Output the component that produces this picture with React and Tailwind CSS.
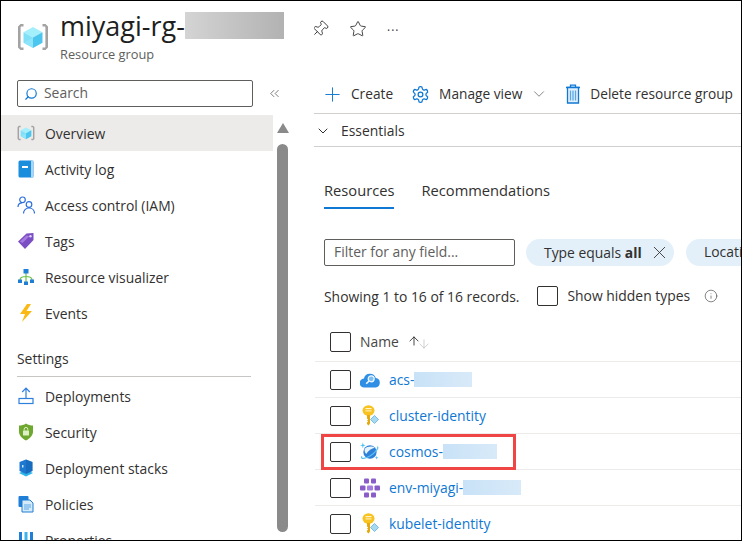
import React from 'react';
import { Pin, Star, Search, ChevronsLeft, ChevronDown, X, Info, ArrowUp, ArrowDown, Plus } from 'lucide-react';

const Cube = ({ size = 32 }) => (
  <svg width={size} height={size} viewBox="0 0 32 32">
    <path d="M6.500 3H3.500L1 5.500v21L3.500 29h3v-2.600H4.200a.6.6 0 01-.6-.6V6.200a.6.6 0 01.6-.6h2.300z" fill="#a3a3a3" />
    <path d="M25.500 3h3L31 5.500v21L28.500 29h-3v-2.600h2.300a.6.6 0 00.6-.6V6.200a.6.6 0 00-.6-.6h-2.300z" fill="#a3a3a3" />
    <path d="M16 6l9.500 5.200L16 16.500l-9.500-5.300z" fill="#a4effc" />
    <path d="M6.500 11.200l9.500 5.300v10.500l-9.500-5.300z" fill="#7fe0f8" />
    <path d="M25.500 11.200L16 16.500v10.500l9.500-5.300z" fill="#4cc6ef" />
    <path d="M6.500 21.700L16 16.500v10.500z" fill="#9aeafb" opacity="0.500" />
  </svg>
);

const ActivityLog = () => (
  <svg width="16" height="18" viewBox="0 0 16 18">
    <rect x="0.500" y="0.500" width="15" height="17" rx="1.500" fill="#1b8ddd" />
    <rect x="13" y="0.500" width="2.500" height="17" fill="#a9d6f5" />
    <rect x="4" y="6" width="6" height="2" fill="#fff" />
  </svg>
);

const Iam = () => (
  <svg width="18" height="18" viewBox="0 0 18 18" fill="none" stroke="#2f6fdc" strokeWidth="1.200">
    <circle cx="5.500" cy="3.800" r="2.800" />
    <path d="M1 11c0-3 2-4.200 4-4.200" />
    <circle cx="12" cy="8.500" r="2.800" />
    <path d="M6.500 17.500c0-3.200 2.200-5.500 5.500-5.500s5.500 2.300 5.500 5.500" />
  </svg>
);

const Tag = () => (
  <svg width="18" height="18" viewBox="0 0 18 18">
    <path d="M1 9.500L9.500 1.500 16.500 1v7L8 17z" fill="#7b4fc4" />
    <path d="M3 9.500l6.500-6 3 .5-7 7z" fill="#a77be0" />
    <circle cx="13.500" cy="4.200" r="1.200" fill="#e3d4f7" />
  </svg>
);

const Visualizer = () => (
  <svg width="18" height="18" viewBox="0 0 18 18">
    <path d="M9 5v9M3 12c0-2.500 2-3.500 6-3.500s6 1 6 3.500" fill="none" stroke="#6cc24a" strokeWidth="1.200" />
    <rect x="6.500" y="1" width="5" height="4.500" fill="#1f7fd6" />
    <rect x="1" y="11.500" width="4" height="3.500" fill="#1f7fd6" />
    <rect x="7" y="13.500" width="4" height="3.500" fill="#1f7fd6" />
    <rect x="13" y="11.500" width="4" height="3.500" fill="#1f7fd6" />
  </svg>
);

const Bolt = () => (
  <svg width="14" height="18" viewBox="0 0 14 18">
    <path d="M8 0L1 10h5l-3 8 10-11H7.500L12 0z" fill="#fbb916" />
  </svg>
);

const Upload = () => (
  <svg width="16" height="18" viewBox="0 0 16 18" fill="none" stroke="#2f7fdc" strokeWidth="1.200">
    <path d="M8 11V1.500M4.200 5L8 1.200 11.800 5" />
    <rect x="1" y="11.500" width="14" height="5" />
  </svg>
);

const Shield = () => (
  <svg width="16" height="18" viewBox="0 0 16 18">
    <path d="M8 0.500c2 1.500 4.500 2 7 2v6c0 4-3 7-7 9-4-2-7-5-7-9v-6c2.500 0 5-.5 7-2z" fill="#6ea82e" />
    <rect x="5" y="7.500" width="6" height="5" rx="0.500" fill="#dff0c8" />
    <path d="M6.200 7.500V6.200a1.800 1.800 0 013.600 0v1.300" fill="none" stroke="#dff0c8" strokeWidth="1" />
  </svg>
);

const Stack = () => (
  <svg width="16" height="18" viewBox="0 0 16 18">
    <path d="M8 11l7 3-7 3.500L1 14z" fill="#2fb5e8" />
    <path d="M8 0.500l6.500 2.500v9L8 15 1.500 12V3z" fill="#1e78cf" />
    <path d="M8 0.500l6.500 2.500v9L8 15z" fill="#0f5aa8" opacity="0.400" />
    <rect x="4" y="6" width="1.500" height="2.500" fill="#bfe4fb" />
  </svg>
);

const Policies = () => (
  <svg width="16" height="18" viewBox="0 0 16 18">
    <rect x="0.500" y="1" width="10" height="11" rx="1" fill="#1f7fd6" />
    <path d="M4 5h8l3 3v9H4z" fill="#d6ebfa" stroke="#1f7fd6" />
    <path d="M6 10h7M6 12h7M6 14h5" stroke="#5aa7e6" />
  </svg>
);

const Props = () => (
  <svg width="16" height="18" viewBox="0 0 16 18">
    <rect x="1" y="1" width="3" height="14" fill="#1f7fd6" />
    <rect x="6.500" y="1" width="3" height="14" fill="#3bb4ee" />
    <rect x="12" y="1" width="3" height="14" fill="#1f7fd6" />
  </svg>
);

const Gear = () => (
  <svg width="19" height="19" viewBox="0 0 24 24" fill="none" stroke="#0f78d4" strokeWidth="1.600">
    <path d="M12.220 2h-.440a2 2 0 00-2 2v.180a2 2 0 01-1 1.730l-.430.250a2 2 0 01-2 0l-.150-.080a2 2 0 00-2.730.730l-.220.380a2 2 0 00.730 2.730l.150.100a2 2 0 011 1.720v.510a2 2 0 01-1 1.740l-.150.090a2 2 0 00-.730 2.730l.220.380a2 2 0 002.730.730l.150-.080a2 2 0 012 0l.430.250a2 2 0 011 1.730V20a2 2 0 002 2h.440a2 2 0 002-2v-.180a2 2 0 011-1.730l.430-.250a2 2 0 012 0l.150.080a2 2 0 002.730-.730l.220-.390a2 2 0 00-.730-2.730l-.150-.080a2 2 0 01-1-1.740v-.500a2 2 0 011-1.740l.150-.090a2 2 0 00.730-2.730l-.220-.380a2 2 0 00-2.730-.730l-.150.080a2 2 0 01-2 0l-.430-.250a2 2 0 01-1-1.730V4a2 2 0 00-2-2z" />
    <circle cx="12" cy="12" r="3" />
  </svg>
);

const Trash = () => (
  <svg width="16" height="20" viewBox="0 0 16 20">
    <path d="M1 3.500h14M5.500 3.500V1.200h5v2.300" fill="none" stroke="#0f78d4" strokeWidth="1.300" />
    <path d="M2.500 3.500v15.500h11V3.500z" fill="#e1f0fb" stroke="#0f78d4" strokeWidth="1.300" />
    <path d="M5.500 6.500v10M8 6.500v10M10.500 6.500v10" stroke="#5aa7e6" strokeWidth="1.300" />
  </svg>
);

const CloudSearch = () => (
  <svg width="20" height="16" viewBox="0 0 20 16">
    <path d="M4.500 15.500a4.500 4.500 0 01-.6-9A6.200 6.200 0 0115.800 6a4.800 4.800 0 01-.2 9.500z" fill="#2f8fe4" />
    <circle cx="11.200" cy="6.800" r="3" fill="#7cc0f3" stroke="#f2f9fe" strokeWidth="1.200" />
    <path d="M9 9L6.200 11.800" stroke="#f2f9fe" strokeWidth="1.600" />
  </svg>
);

const Key = () => (
  <svg width="17" height="21" viewBox="0 0 17 21">
    <ellipse cx="6.500" cy="5.500" rx="6" ry="5.200" fill="#f8c320" />
    <rect x="3.500" y="3" width="6" height="1.200" fill="#fff6cf" />
    <rect x="3.500" y="5.400" width="6" height="1" fill="#fff6cf" />
    <path d="M5 10h3v8.500L6.500 20.500 5 19v-1.500l1.200-1L5 15.500l1.200-1L5 13.500z" fill="#e5a90c" />
    <path d="M12.500 10.500l4 4-4 4-4-4z" fill="#a9d9f1" stroke="#5db2de" strokeWidth="0.800" />
  </svg>
);

const Cosmos = () => (
  <svg width="21" height="21" viewBox="0 0 21 21">
    <circle cx="10.500" cy="11" r="7" fill="#2f80d8" />
    <path d="M5 7.500c2.500-2.500 8-3 10.500-1-3 .5-7 3-9 6.500-1.500-1.500-2-3.800-1.500-5.500z" fill="#e8f4fd" />
    <path d="M2 15.500c-1 1.500 0 2.500 2 2.200 4-.5 10-4 13-8 1.500-2 2.500-3.500 1-4" fill="none" stroke="#59c3f2" strokeWidth="1.300" />
    <path d="M3 1l.7 2.300L6 4l-2.300.7L3 7l-.7-2.300L0 4l2.300-.7z" fill="#4ec1f2" />
    <path d="M17.500 15l.5 1.500 1.500.5-1.500.5-.5 1.500-.5-1.500-1.500-.5 1.500-.5z" fill="#4ec1f2" />
  </svg>
);

const Env = () => (
  <svg width="20" height="20" viewBox="0 0 20 20" fill="#8a5cc9">
    <rect x="4" y="0.500" width="5" height="5" rx="1" />
    <rect x="11" y="0.500" width="5" height="5" rx="1" />
    <rect x="0" y="7.500" width="5.500" height="5" rx="1" />
    <rect x="7" y="7.500" width="6" height="5" rx="1" fill="#a57de0" />
    <rect x="14.500" y="7.500" width="5.500" height="5" rx="1" />
    <rect x="4" y="14.500" width="5" height="5" rx="1" />
    <rect x="11" y="14.500" width="5" height="5" rx="1" />
  </svg>
);

const navTop = [
  { label: 'Overview', icon: <Cube size={18} />, active: true },
  { label: 'Activity log', icon: <ActivityLog /> },
  { label: 'Access control (IAM)', icon: <Iam /> },
  { label: 'Tags', icon: <Tag /> },
  { label: 'Resource visualizer', icon: <Visualizer /> },
  { label: 'Events', icon: <Bolt /> },
];

const navSettings = [
  { label: 'Deployments', icon: <Upload /> },
  { label: 'Security', icon: <Shield /> },
  { label: 'Deployment stacks', icon: <Stack /> },
  { label: 'Policies', icon: <Policies /> },
  { label: 'Properties', icon: <Props /> },
];

const rows = [
  { name: 'acs-', hidden: 'w-[58px]', icon: <CloudSearch /> },
  { name: 'cluster-identity', icon: <Key /> },
  { name: 'cosmos-', hidden: 'w-[54px]', icon: <Cosmos />, marked: true },
  { name: 'env-miyagi-', hidden: 'w-[58px]', icon: <Env /> },
  { name: 'kubelet-identity', icon: <Key /> },
];

const NavItem = ({ item }) => (
  <div className={`flex h-9 shrink-0 items-center pl-4 text-[#323130] ${item.active ? 'bg-[#edebe9]' : ''}`}>
    <span className="flex w-[18px] justify-center">{item.icon}</span>
    <span className="ml-[10px] pt-[2px]">{item.label}</span>
  </div>
);

const Checkbox = () => <span className="block h-5 w-[21px] shrink-0 rounded-[2px] border border-[#323130]" />;

export default function App() {
  return (
    <div className="flex h-[541px] w-[742px] overflow-hidden border border-black bg-white font-['Open_Sans',sans-serif] text-[13.9px] text-[#323130]">
      <div className="flex w-[313px] shrink-0 flex-col">
        <div className="flex h-[69px] shrink-0 pl-4 pt-[20px]">
          <Cube />
          <div className="-mt-[11px] ml-[11px]">
            <div className="flex h-[31px] items-center">
              <span className="text-[27px] leading-none text-[#201f1e]">miyagi-rg-</span>
              <span className="h-[27px] w-[99px] bg-gradient-to-r from-[#d4d4d4] to-[#b2b2b2]" />
            </div>
            <div className="mt-[4px] text-[12.8px] text-[#605e5c]">Resource group</div>
          </div>
        </div>
        <div className="mt-[10px] flex items-center pl-4">
          <div className="flex h-[27px] w-[236px] items-center rounded-[2px] border border-[#605e5c] pl-[6px] text-[#605e5c]">
            <Search size={14} className="-scale-x-100 text-[#0f78d4]" />
            <span className="ml-[6px]">Search</span>
          </div>
          <ChevronsLeft size={15} strokeWidth={1} className="ml-[14px] text-[#323130]" />
        </div>
        <div className="mt-2 flex min-h-0 flex-1">
          <div className="flex w-[272px] shrink-0 flex-col overflow-hidden">
            {navTop.map((item) => <NavItem key={item.label} item={item} />)}
            <div className="mt-[18px] shrink-0 pl-4 font-medium leading-[20px] text-[#323130]">Settings</div>
            <div className="ml-4 mt-[7px] h-px w-[234px] shrink-0 bg-[#c8c6c4]" />
            <div className="h-px shrink-0" />
            {navSettings.map((item) => <NavItem key={item.label} item={item} />)}
          </div>
          <div className="ml-[4px] flex w-[11px] flex-col items-center">
            <span className="mt-[8px] h-0 w-0 border-x-[6px] border-b-[10px] border-x-transparent border-b-[#8a8a8a]" />
            <span className="mt-[11px] h-[388px] w-[11px] rounded-full bg-[#8a8a8a]" />
          </div>
        </div>
      </div>

      <div className="min-w-0 flex-1 overflow-hidden">
        <div className="flex h-[55px] items-start pt-[19px] text-[#323130]">
          <Pin size={18} strokeWidth={1.2} className="ml-[-3px] rotate-45" />
          <Star size={18} strokeWidth={1.2} className="ml-5" />
          <span className="ml-[20px] mt-[5px] text-[12px] leading-none tracking-[1px]">···</span>
        </div>
        <div className="flex h-[58px] items-center border-b border-[#d2d0ce] pt-[19px] text-[13.7px] whitespace-nowrap">
          <Plus size={23} strokeWidth={1} className="ml-[7px] text-[#0f78d4]" />
          <span className="ml-[7px]">Create</span>
          <span className="ml-[18px]"><Gear /></span>
          <span className="ml-[9px]">Manage view</span>
          <ChevronDown size={18} strokeWidth={1} className="ml-[8px] text-[#605e5c]" />
          <span className="ml-[17px]"><Trash /></span>
          <span className="ml-[9px]">Delete resource group</span>
        </div>
        <div className="flex h-[33px] items-center border-b border-[#d2d0ce] pt-[2px] font-medium">
          <ChevronDown size={16} strokeWidth={1.500} className="ml-[1px]" />
          <span className="ml-[10px]">Essentials</span>
        </div>
        <div className="ml-[10px] mt-[33px] flex items-start gap-[27px] text-[14.7px] leading-[20px]">
          <span className="border-b-2 border-[#0f78d4] pb-[7px] font-medium">Resources</span>
          <span>Recommendations</span>
        </div>
        <div className="ml-[10px] mt-[30px] flex items-center whitespace-nowrap">
          <div className="flex h-[27px] w-[191px] shrink-0 items-center rounded-[2px] border border-[#605e5c] pl-[9px] text-[#605e5c]">Filter for any field...</div>
          <div className="ml-[11px] flex h-[27px] w-[148px] shrink-0 items-center rounded-full bg-[#e3f0fa] pl-[18px]">
            <span className="pt-px">Type equals <b className="font-bold">all</b></span>
            <X size={21} strokeWidth={1} className="ml-auto mr-[4px]" />
          </div>
          <div className="ml-3 flex h-[27px] w-[100px] shrink-0 items-center rounded-full bg-[#e3f0fa] pl-[18px]">Location</div>
        </div>
        <div className="ml-[10px] mt-[20px] flex h-5 items-center whitespace-nowrap">
          <span className="pt-[2px]">Showing 1 to 16 of 16 records.</span>
          <span className="ml-[18px]"><Checkbox /></span>
          <span className="ml-[9px]">Show hidden types</span>
          <Info size={14} strokeWidth={1} className="ml-[14px] text-[#323130]" />
        </div>
        <div className="ml-[1px] mt-[26px] flex h-[30px] items-start border-b border-[#edebe9] pl-[15px]">
          <Checkbox />
          <span className="ml-[9px] font-medium leading-[20px] text-[#484644]">Name</span>
          <span className="ml-[8px] flex pt-[2px]">
            <ArrowUp size={14} strokeWidth={1.400} className="text-[#201f1e]" />
            <ArrowDown size={14} strokeWidth={1} className="-ml-[4px] mt-[3px] text-[#b3b0ad]" />
          </span>
        </div>
        {rows.map((row) => (
          <div key={row.name} className="relative ml-[1px] flex h-9 items-center border-b border-[#edebe9] pl-[15px] text-[#0f78d4]">
            <Checkbox />
            <span className="ml-[9px] flex w-5 justify-center">{row.icon}</span>
            <span className="ml-[9px] pt-[2px]">{row.name}</span>
            {row.hidden && <span className={`h-[15px] bg-gradient-to-r from-[#c9e2f7] to-[#d8eaf9] ${row.hidden}`} />}
            {row.marked && <span className="absolute left-[6px] top-0 h-[36px] w-[195px] border-[3px] border-[#f04545]" />}
          </div>
        ))}
      </div>
    </div>
  );
}
